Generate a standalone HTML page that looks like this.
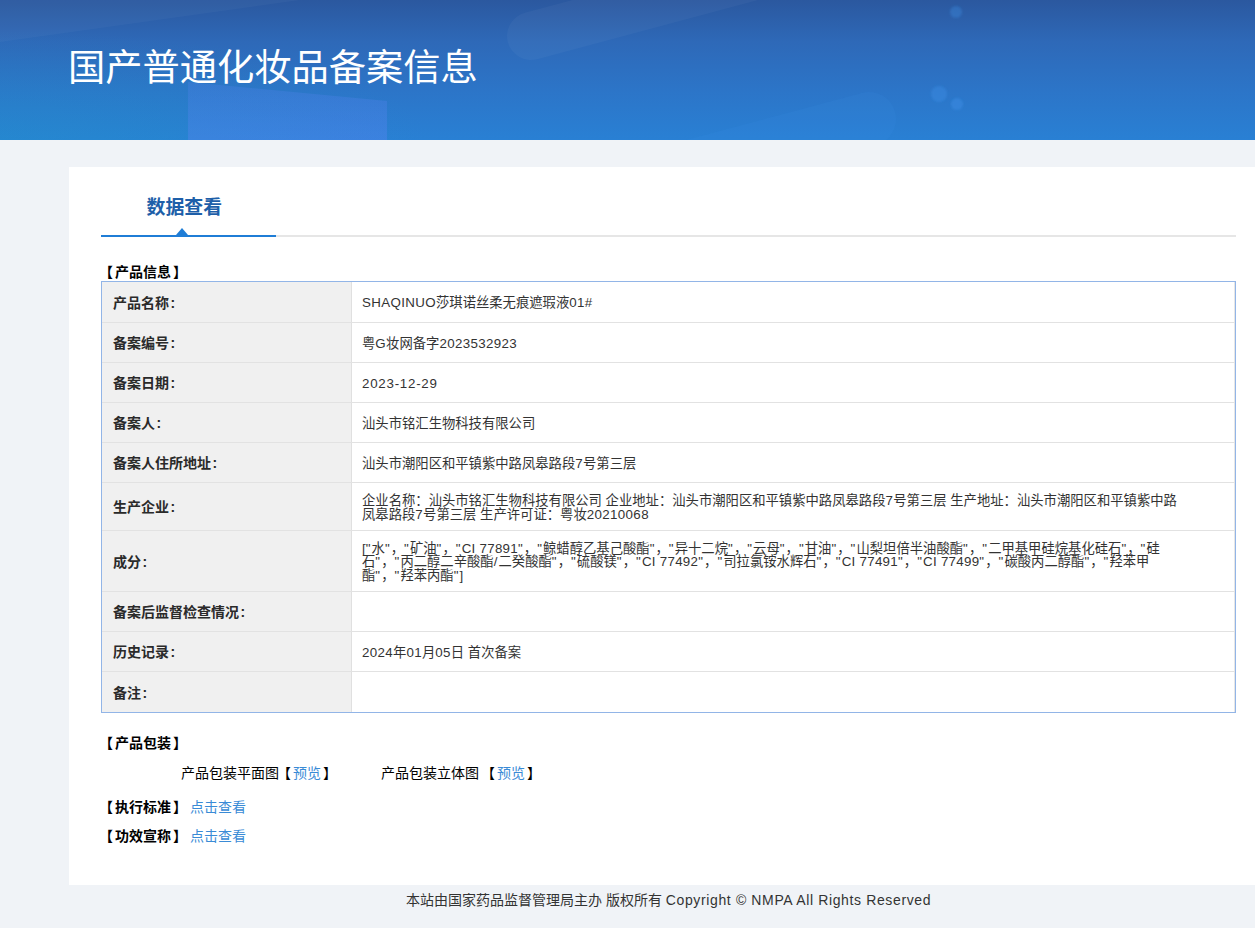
<!DOCTYPE html>
<html lang="zh-CN">
<head>
<meta charset="utf-8">
<title>国产普通化妆品备案信息</title>
<style>
*{box-sizing:border-box;margin:0;padding:0}
html,body{width:1255px;height:928px;overflow:hidden}
body{background:#f0f3f7;font-family:"Liberation Sans","Noto Sans CJK SC",sans-serif;font-size:14px;color:#333;position:relative}
i,b{font-style:normal;font-weight:inherit}
s{text-decoration:none;margin-left:1.4px;position:relative;top:1.2px}
u,em{text-decoration:none;font-style:normal;position:relative;left:-2px}
em{left:2px}
i{letter-spacing:1.12px}
b{letter-spacing:.36px}
b.c{letter-spacing:.28px}
.hd{position:absolute;left:0;top:0;width:1255px;height:140px;overflow:hidden;
 background:linear-gradient(180deg,#2b589f 0%,#2e69b8 30%,#2c75c8 65%,#2980d4 100%)}
.hd svg{position:absolute;left:0;top:0}
.hd h1{position:absolute;left:68px;top:42px;font-size:37.25px;line-height:52px;font-weight:400;color:#fff;white-space:nowrap}
.card{position:absolute;left:69px;top:167px;width:1200px;height:718px;background:#fff}
.tab{position:absolute;left:146.5px;top:194.5px;font-size:18.9px;line-height:26px;font-weight:700;color:#1e5fa9;white-space:nowrap}
.ln-g{position:absolute;left:101px;top:235px;width:1135px;height:2px;background:#e6e6e6}
.ln-b{position:absolute;left:101px;top:235px;width:175px;height:2px;background:#1f7dd6}
.tri{position:absolute;left:176px;top:228px;width:0;height:0;border-left:6.5px solid transparent;border-right:6.5px solid transparent;border-bottom:7px solid #1f7dd6}
.sec{position:absolute;font-weight:700;color:#000;white-space:nowrap;line-height:16px}
.tb{position:absolute;left:101px;top:281px;width:1135px;height:432px;border:1px solid #92b5e7;background:#fff}
.r{position:absolute;left:0;width:1133px;border-bottom:1px solid #e2e2e2;border-right:1px solid #e6e6e6}
.r .k{position:absolute;left:0;top:0;bottom:0;width:250px;background:#f0f0f0;border-right:1px solid #e0e0e0;font-weight:700;color:#2a2a2a;padding-left:11px;padding-bottom:1px;display:flex;align-items:center;white-space:nowrap}
.r .v{position:absolute;left:250px;top:0;bottom:0;right:0;padding-left:10px;padding-top:2px;display:flex;align-items:center;font-size:13.333px;line-height:13.333px;white-space:nowrap;color:#333}
a{color:#3a8bd6;text-decoration:none}
.t{position:absolute;white-space:nowrap;line-height:16px;color:#000}
.ft{position:absolute;left:406px;top:891px;font-size:14px;line-height:18px;color:#333;white-space:nowrap}
</style>
</head>
<body>
<div class="hd">
<svg width="1255" height="140" viewBox="0 0 1255 140">
 <defs>
  <linearGradient id="pg" x1="0" y1="0" x2="0" y2="1"><stop offset="0" stop-color="#5a84f2" stop-opacity=".22"/><stop offset="1" stop-color="#5a84f2" stop-opacity=".38"/></linearGradient>
  <radialGradient id="lf" cx="0" cy="140" r="1" gradientUnits="userSpaceOnUse" gradientTransform="translate(0 140) scale(430 110) translate(0 -140)"><stop offset="0" stop-color="#1e96c8" stop-opacity=".34"/><stop offset="1" stop-color="#1e96c8" stop-opacity="0"/></radialGradient>
  <filter id="bl" x="-50%" y="-50%" width="200%" height="200%"><feGaussianBlur stdDeviation="0.9"/></filter>
 </defs>
 <rect x="0" y="20" width="440" height="120" fill="url(#lf)"/>
 <polygon points="188,82 387,101 387,140 188,140" fill="url(#pg)"/>
 <rect x="507" y="12" width="700" height="48" rx="24" transform="rotate(-15 531 36)" fill="#fff" fill-opacity=".035"/>
 <rect x="196" y="92" width="700" height="54" rx="27" transform="rotate(-15 869 119)" fill="#3fa0f0" fill-opacity=".09"/>
 <polygon points="0,0 300,0 0,42" fill="#fff" fill-opacity=".03"/>
 <circle cx="956" cy="12" r="6" fill="#3c8ee6" fill-opacity=".35" filter="url(#bl)"/>
 <circle cx="939" cy="94" r="8" fill="#3c8ee6" fill-opacity=".4" filter="url(#bl)"/>
 <circle cx="957" cy="104" r="6" fill="#3c8ee6" fill-opacity=".5" filter="url(#bl)"/>
</svg>
<h1>国产普通化妆品备案信息</h1>
</div>
<div class="card"></div>
<div class="tab">数据查看</div>
<div class="ln-g"></div><div class="ln-b"></div><div class="tri"></div>
<div class="sec" style="left:101px;top:264px"><u>【</u>产品信息<em>】</em></div>
<div class="tb">
 <div class="r" style="top:0;height:41px"><div class="k">产品名称<s>:</s></div><div class="v"><span><b>SHAQINUO</b>莎琪诺丝柔无痕遮瑕液<b>01#</b></span></div></div>
 <div class="r" style="top:41px;height:40px"><div class="k">备案编号<s>:</s></div><div class="v"><span>粤<b>G</b>妆网备字<b>2023532923</b></span></div></div>
 <div class="r" style="top:81px;height:40px"><div class="k">备案日期<s>:</s></div><div class="v"><b style="letter-spacing:.75px">2023-12-29</b></div></div>
 <div class="r" style="top:121px;height:40px"><div class="k">备案人<s>:</s></div><div class="v">汕头市铭汇生物科技有限公司</div></div>
 <div class="r" style="top:161px;height:40px"><div class="k">备案人住所地址<s>:</s></div><div class="v"><span>汕头市潮阳区和平镇紫中路凤皋路段<b>7</b>号第三层</span></div></div>
 <div class="r" style="top:201px;height:48px"><div class="k">生产企业<s>:</s></div><div class="v"><div>企业名称：汕头市铭汇生物科技有限公司 企业地址：汕头市潮阳区和平镇紫中路凤皋路段<b>7</b>号第三层 生产地址：汕头市潮阳区和平镇紫中路<br>凤皋路段<b>7</b>号第三层 生产许可证：粤妆<b>20210068</b></div></div></div>
 <div class="r" style="top:249px;height:61px"><div class="k">成分<s>:</s></div><div class="v"><div>[<i>"</i>水<i>"</i>，<i>"</i>矿油<i>"</i>，<i>"</i><b class="c">CI 77891</b><i>"</i>，<i>"</i>鲸蜡醇乙基己酸酯<i>"</i>，<i>"</i>异十二烷<i>"</i>，<i>"</i>云母<i>"</i>，<i>"</i>甘油<i>"</i>，<i>"</i>山梨坦倍半油酸酯<i>"</i>，<i>"</i>二甲基甲硅烷基化硅石<i>"</i>，<i>"</i>硅<br>
石<i>"</i>，<i>"</i>丙二醇二辛酸酯<i>/</i>二癸酸酯<i>"</i>，<i>"</i>硫酸镁<i>"</i>，<i>"</i><b class="c">CI 77492</b><i>"</i>，<i>"</i>司拉氯铵水辉石<i>"</i>，<i>"</i><b class="c">CI 77491</b><i>"</i>，<i>"</i><b class="c">CI 77499</b><i>"</i>，<i>"</i>碳酸丙二醇酯<i>"</i>，<i>"</i>羟苯甲<br>
酯<i>"</i>，<i>"</i>羟苯丙酯<i>"</i>]</div></div></div>
 <div class="r" style="top:310px;height:40px"><div class="k">备案后监督检查情况<s>:</s></div><div class="v"></div></div>
 <div class="r" style="top:350px;height:40px"><div class="k">历史记录<s>:</s></div><div class="v"><span><b>2024</b>年<b>01</b>月<b>05</b>日 首次备案</span></div></div>
 <div class="r" style="top:390px;height:40px;border-bottom:0"><div class="k">备注<s>:</s></div><div class="v"></div></div>
</div>
<div class="sec" style="left:101px;top:735px"><u>【</u>产品包装<em>】</em></div>
<div class="t" style="left:181px;top:765px">产品包装平面图<u>【</u><a>预览</a><em>】</em></div>
<div class="t" style="left:381px;top:765px">产品包装立体图 <u>【</u><a>预览</a><em>】</em></div>
<div class="sec" style="left:101px;top:799px"><u>【</u>执行标准<em>】</em></div><div class="t" style="left:190px;top:799px"><a>点击查看</a></div>
<div class="sec" style="left:101px;top:828px"><u>【</u>功效宣称<em>】</em></div><div class="t" style="left:190px;top:828px"><a>点击查看</a></div>
<div class="ft">本站由国家药品监督管理局主办 版权所有 <span style="letter-spacing:.63px">Copyright © NMPA All Rights Reserved</span></div>
</body>
</html>
